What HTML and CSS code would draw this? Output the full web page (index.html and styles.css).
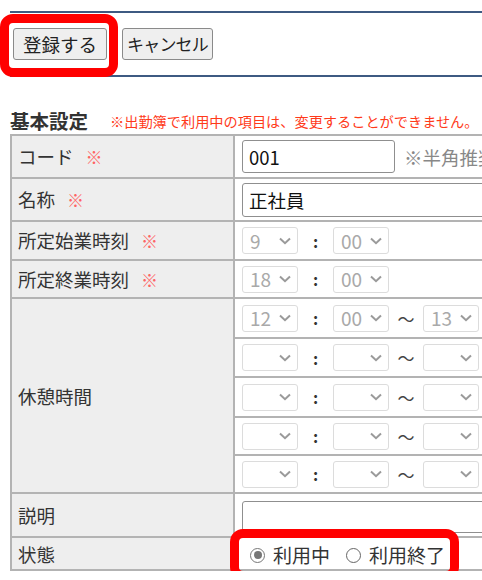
FILE: index.html
```html
<!DOCTYPE html>
<html lang="ja">
<head>
<meta charset="utf-8">
<title>勤務区分</title>
<link rel="stylesheet" href="styles.css">
</head>
<body>
<div class="page">
  <div class="toolbar">
    <span class="hl-wrap">
      <button class="btn" type="button">登録する</button>
      <span class="hl hl-btn"></span>
    </span>
    <button class="btn btn-cancel" type="button">キャンセル</button>
  </div>

  <div class="section-head">
    <h2 class="section-title">基本設定</h2>
    <span class="section-note">※出勤簿で利用中の項目は、変更することができません。</span>
  </div>

  <table class="form">
    <tr class="r-code">
      <th>コード<span class="req">※</span></th>
      <td><span class="field"><input class="txt txt-code" type="text" value="001"><span class="hint">※半角推奨</span></span></td>
    </tr>
    <tr class="r-name">
      <th>名称<span class="req">※</span></th>
      <td><input class="txt txt-wide" type="text" value="正社員"></td>
    </tr>
    <tr class="r-start">
      <th>所定始業時刻<span class="req">※</span></th>
      <td>
        <div class="time">
          <span class="sel"><span class="val">9</span><svg class="chev" viewBox="0 0 12 8"><path d="M1 1.5 L6 6.2 L11 1.5"/></svg></span>
          <span class="colon">:</span>
          <span class="sel"><span class="val">00</span><svg class="chev" viewBox="0 0 12 8"><path d="M1 1.5 L6 6.2 L11 1.5"/></svg></span>
        </div>
      </td>
    </tr>
    <tr class="r-end">
      <th>所定終業時刻<span class="req">※</span></th>
      <td>
        <div class="time">
          <span class="sel"><span class="val">18</span><svg class="chev" viewBox="0 0 12 8"><path d="M1 1.5 L6 6.2 L11 1.5"/></svg></span>
          <span class="colon">:</span>
          <span class="sel"><span class="val">00</span><svg class="chev" viewBox="0 0 12 8"><path d="M1 1.5 L6 6.2 L11 1.5"/></svg></span>
        </div>
      </td>
    </tr>
    <tr class="r-brk1">
      <th rowspan="5">休憩時間</th>
      <td>
        <div class="time">
          <span class="sel"><span class="val">12</span><svg class="chev" viewBox="0 0 12 8"><path d="M1 1.5 L6 6.2 L11 1.5"/></svg></span>
          <span class="colon">:</span>
          <span class="sel"><span class="val">00</span><svg class="chev" viewBox="0 0 12 8"><path d="M1 1.5 L6 6.2 L11 1.5"/></svg></span>
          <span class="tilde">～</span>
          <span class="sel"><span class="val">13</span><svg class="chev" viewBox="0 0 12 8"><path d="M1 1.5 L6 6.2 L11 1.5"/></svg></span>
        </div>
      </td>
    </tr>
    <tr class="r-brk2">
      <td>
        <div class="time">
          <span class="sel"><span class="val"></span><svg class="chev" viewBox="0 0 12 8"><path d="M1 1.5 L6 6.2 L11 1.5"/></svg></span>
          <span class="colon">:</span>
          <span class="sel"><span class="val"></span><svg class="chev" viewBox="0 0 12 8"><path d="M1 1.5 L6 6.2 L11 1.5"/></svg></span>
          <span class="tilde">～</span>
          <span class="sel"><span class="val"></span><svg class="chev" viewBox="0 0 12 8"><path d="M1 1.5 L6 6.2 L11 1.5"/></svg></span>
        </div>
      </td>
    </tr>
    <tr class="r-brk3">
      <td>
        <div class="time">
          <span class="sel"><span class="val"></span><svg class="chev" viewBox="0 0 12 8"><path d="M1 1.5 L6 6.2 L11 1.5"/></svg></span>
          <span class="colon">:</span>
          <span class="sel"><span class="val"></span><svg class="chev" viewBox="0 0 12 8"><path d="M1 1.5 L6 6.2 L11 1.5"/></svg></span>
          <span class="tilde">～</span>
          <span class="sel"><span class="val"></span><svg class="chev" viewBox="0 0 12 8"><path d="M1 1.5 L6 6.2 L11 1.5"/></svg></span>
        </div>
      </td>
    </tr>
    <tr class="r-brk4">
      <td>
        <div class="time">
          <span class="sel"><span class="val"></span><svg class="chev" viewBox="0 0 12 8"><path d="M1 1.5 L6 6.2 L11 1.5"/></svg></span>
          <span class="colon">:</span>
          <span class="sel"><span class="val"></span><svg class="chev" viewBox="0 0 12 8"><path d="M1 1.5 L6 6.2 L11 1.5"/></svg></span>
          <span class="tilde">～</span>
          <span class="sel"><span class="val"></span><svg class="chev" viewBox="0 0 12 8"><path d="M1 1.5 L6 6.2 L11 1.5"/></svg></span>
        </div>
      </td>
    </tr>
    <tr class="r-brk5">
      <td>
        <div class="time">
          <span class="sel"><span class="val"></span><svg class="chev" viewBox="0 0 12 8"><path d="M1 1.5 L6 6.2 L11 1.5"/></svg></span>
          <span class="colon">:</span>
          <span class="sel"><span class="val"></span><svg class="chev" viewBox="0 0 12 8"><path d="M1 1.5 L6 6.2 L11 1.5"/></svg></span>
          <span class="tilde">～</span>
          <span class="sel"><span class="val"></span><svg class="chev" viewBox="0 0 12 8"><path d="M1 1.5 L6 6.2 L11 1.5"/></svg></span>
        </div>
      </td>
    </tr>
    <tr class="r-desc">
      <th>説明</th>
      <td><input class="txt txt-wide txt-desc" type="text" value=""></td>
    </tr>
    <tr class="r-state">
      <th>状態</th>
      <td>
        <span class="radios">
          <span class="radio"><span class="dot on"></span>利用中</span>
          <span class="radio"><span class="dot"></span>利用終了</span>
          <span class="hl hl-radio"></span>
        </span>
      </td>
    </tr>
  </table>
</div>
</body>
</html>
```

FILE: styles.css
```css
html, body {
  margin: 0;
  padding: 0;
  overflow: hidden;
  background: #fff;
}
body {
  font-family: "Noto Sans CJK JP", "Noto Sans", sans-serif;
  color: #333;
  font-size: 18.5px;
}
.page {
  padding: 11px 0 0 10px;
  width: 640px;
}

/* toolbar */
.toolbar {
  display: flex;
  align-items: center;
  gap: 15px;
  border-top: 2px solid #3d5a82;
  border-bottom: 2px solid #3d5a82;
  padding: 15px 0 15px 3px;
}
.hl-wrap {
  position: relative;
  display: inline-flex;
}
.btn {
  font-family: "Noto Sans CJK JP", sans-serif;
  font-size: 18.5px;
  line-height: 24px;
  color: #222;
  background: #efefef;
  border: 1px solid #8a8a8a;
  border-radius: 3px;
  height: 32px;
  width: 94px;
  padding: 0;
  margin: 0;
  white-space: nowrap;
}
.btn-cancel {
  width: 91px;
  font-size: 17px;
  letter-spacing: -0.8px;
}
.hl {
  position: absolute;
  border: 9px solid #ff0000;
  border-radius: 13px;
  pointer-events: none;
}
.hl-btn {
  top: -14px;
  left: -13px;
  right: -11px;
  bottom: -17px;
}

/* section head */
.section-head {
  display: flex;
  align-items: center;
  gap: 22px;
  padding-top: 32px;
  height: 24px;
  margin-bottom: 1px;
}
.section-title {
  margin: 0;
  font-size: 19.5px;
  font-weight: bold;
  line-height: 24px;
  color: #333;
}
.section-note {
  font-size: 14.2px;
  line-height: 24px;
  color: #ff3a1a;
  white-space: nowrap;
}

/* table */
.form {
  border-collapse: collapse;
  width: 620px;
}
.form th,
.form td {
  border: 2px solid #b3b3b3;
  padding: 0;
  vertical-align: middle;
}
.form th {
  width: 215px;
  background: #eeeeee;
  text-align: left;
  font-weight: normal;
  padding-left: 6px;
  color: #333;
  line-height: 24px;
}
.form td {
  padding-left: 7px;
}
.req {
  color: #ff6464;
  margin-left: 12px;
  font-size: 17px;
}
.r-code td, .r-code th { height: 41px; }
.r-name td, .r-name th { height: 41px; }
.r-start td, .r-start th { height: 37px; }
.r-end td, .r-end th { height: 36px; }
.r-brk1 td { height: 38px; }
.r-brk2 td { height: 37px; }
.r-brk3 td { height: 38px; }
.r-brk4 td { height: 36px; }
.r-brk5 td { height: 36px; }
.r-desc td, .r-desc th { height: 42px; }
.r-state td, .r-state th { height: 31px; }

.field {
  display: flex;
  align-items: center;
}
.txt {
  box-sizing: border-box;
  font-family: "Noto Sans CJK JP", sans-serif;
  font-size: 18.5px;
  color: #111;
  border: 1px solid #8f8f8f;
  border-radius: 3px;
  padding: 0 0 0 6px;
  margin: 0;
  height: 33px;
  background: #fff;
}
.txt-code {
  width: 153px;
}
.hint {
  margin-left: 9px;
  color: #888;
  white-space: nowrap;
}
.txt-wide {
  width: 340px;
  height: 34px;
}
.txt-desc {
  height: 32px;
  margin-top: 3px;
}

/* time selects */
.time {
  display: flex;
  align-items: center;
}
.sel {
  box-sizing: border-box;
  display: inline-flex;
  align-items: center;
  justify-content: space-between;
  width: 56px;
  height: 27px;
  border: 1px solid #dcdcdc;
  border-radius: 3px;
  background: #fff;
  padding: 0 6px 0 7px;
  color: #a9a9a9;
  font-size: 19px;
  line-height: 24px;
}
.chev {
  width: 12px;
  height: 8px;
  flex: none;
  margin-left: auto;
}
.chev path {
  fill: none;
  stroke: #9a9a9a;
  stroke-width: 2;
}
.colon {
  width: 35px;
  text-align: center;
  color: #333;
  font-weight: bold;
  font-size: 16px;
}
.tilde {
  width: 34px;
  text-align: center;
  color: #444;
  font-size: 17px;
}

/* radios */
.radios {
  position: relative;
  display: inline-flex;
  align-items: center;
  gap: 16px;
  margin-left: 8px;
  vertical-align: middle;
}
.radio {
  display: inline-flex;
  align-items: center;
  gap: 8px;
  color: #333;
  font-size: 19px;
  line-height: 24px;
}
.dot {
  box-sizing: border-box;
  width: 15px;
  height: 15px;
  border-radius: 50%;
  border: 1.5px solid #666;
  background: #fff;
  display: inline-flex;
  align-items: center;
  justify-content: center;
}
.dot.on {
  border-color: #777;
}
.dot.on::after {
  content: "";
  width: 8px;
  height: 8px;
  border-radius: 50%;
  background: #777;
}
.hl-radio {
  top: -14px;
  left: -20px;
  right: -14px;
  bottom: -13px;
}
```
